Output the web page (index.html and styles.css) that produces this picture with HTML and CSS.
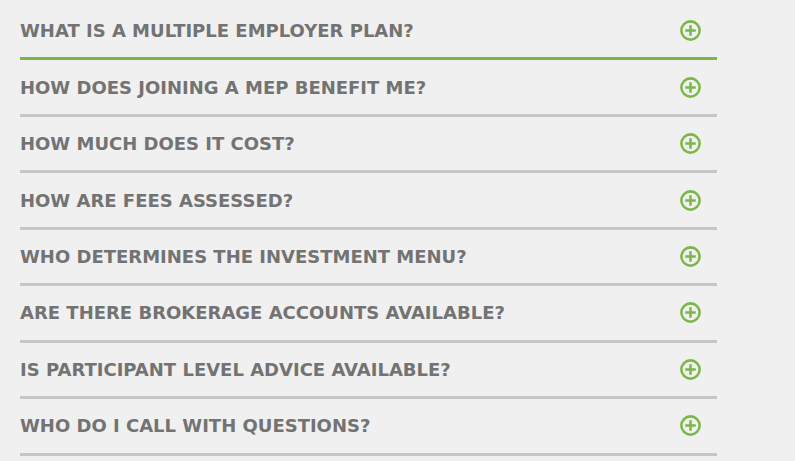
FILE: index.html
```html
<!DOCTYPE html>
<html lang="en">
<head>
  <meta charset="UTF-8">
  <title>FAQ</title>
  <link rel="stylesheet" href="styles.css">
</head>
<body>
  <div class="faq">
    <div class="item active">
      <span class="question">WHAT IS A MULTIPLE EMPLOYER PLAN?</span>
      <svg class="plus" viewBox="0 0 20 20"><circle cx="10" cy="10" r="8.7"/><path d="M10 5v10M5 10h10"/></svg>
    </div>
    <div class="item">
      <span class="question">HOW DOES JOINING A MEP BENEFIT ME?</span>
      <svg class="plus" viewBox="0 0 20 20"><circle cx="10" cy="10" r="8.7"/><path d="M10 5v10M5 10h10"/></svg>
    </div>
    <div class="item">
      <span class="question">HOW MUCH DOES IT COST?</span>
      <svg class="plus" viewBox="0 0 20 20"><circle cx="10" cy="10" r="8.7"/><path d="M10 5v10M5 10h10"/></svg>
    </div>
    <div class="item">
      <span class="question">HOW ARE FEES ASSESSED?</span>
      <svg class="plus" viewBox="0 0 20 20"><circle cx="10" cy="10" r="8.7"/><path d="M10 5v10M5 10h10"/></svg>
    </div>
    <div class="item">
      <span class="question">WHO DETERMINES THE INVESTMENT MENU?</span>
      <svg class="plus" viewBox="0 0 20 20"><circle cx="10" cy="10" r="8.7"/><path d="M10 5v10M5 10h10"/></svg>
    </div>
    <div class="item">
      <span class="question">ARE THERE BROKERAGE ACCOUNTS AVAILABLE?</span>
      <svg class="plus" viewBox="0 0 20 20"><circle cx="10" cy="10" r="8.7"/><path d="M10 5v10M5 10h10"/></svg>
    </div>
    <div class="item">
      <span class="question">IS PARTICIPANT LEVEL ADVICE AVAILABLE?</span>
      <svg class="plus" viewBox="0 0 20 20"><circle cx="10" cy="10" r="8.7"/><path d="M10 5v10M5 10h10"/></svg>
    </div>
    <div class="item">
      <span class="question">WHO DO I CALL WITH QUESTIONS?</span>
      <svg class="plus" viewBox="0 0 20 20"><circle cx="10" cy="10" r="8.7"/><path d="M10 5v10M5 10h10"/></svg>
    </div>
  </div>
</body>
</html>
```

FILE: styles.css
```css
body {
  margin: 0;
  background-color: #f0f0f0;
  font-family: 'DejaVu Sans', sans-serif;
}
.faq {
  width: 697px;
  margin-left: 20px;
  padding-top: 4px;
}
.item {
  box-sizing: border-box;
  height: 56.45px;
  display: flex;
  align-items: center;
  justify-content: space-between;
  padding-right: 16px;
  border-bottom: 3px solid #c6c6c6;
}
.item.active {
  border-bottom-color: #7ab648;
}
.question {
  color: #737373;
  font-size: 18px;
  font-weight: 700;
}
.plus {
  width: 21px;
  height: 21px;
  fill: none;
  stroke: #7ab648;
  stroke-width: 2.4;
}
```
